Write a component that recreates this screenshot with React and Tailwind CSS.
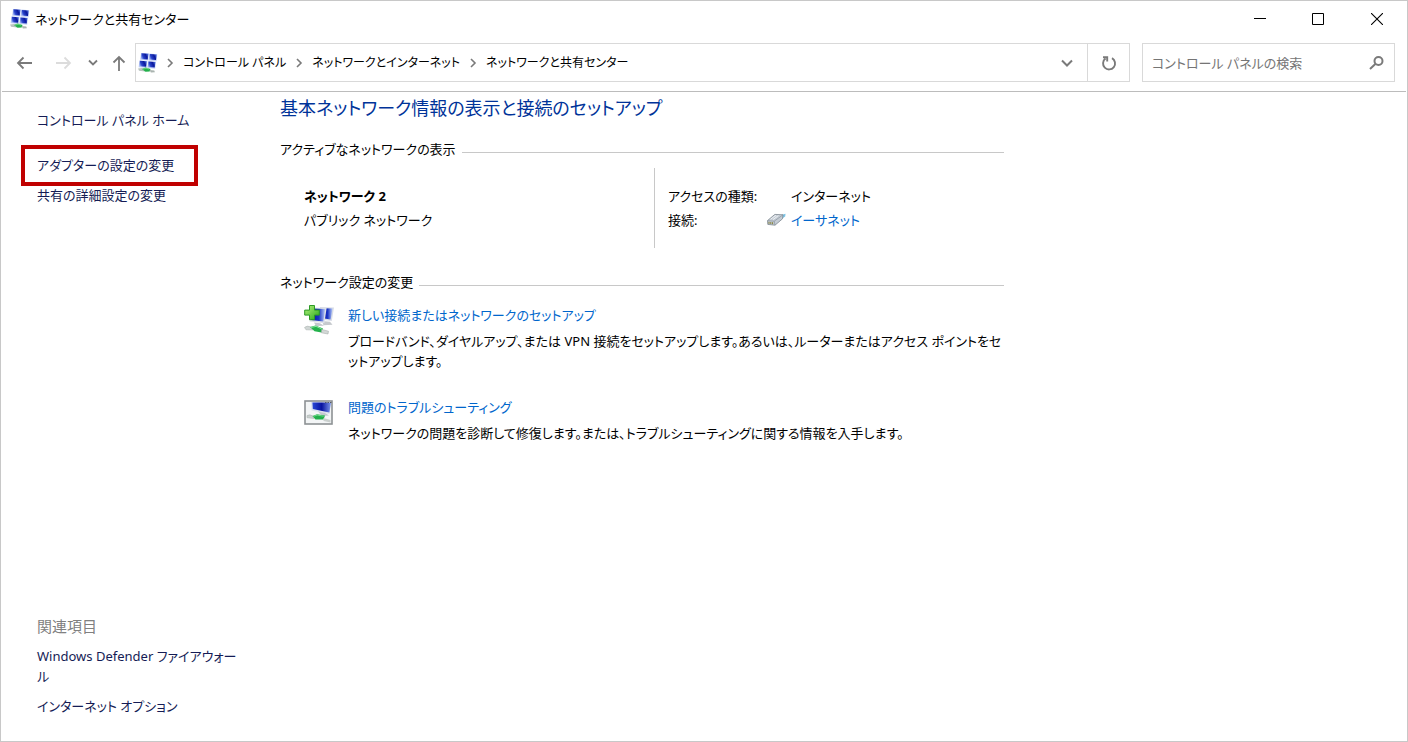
const FONT =
  "font-['Noto_Sans','Noto_Sans_CJK_JP',sans-serif] [font-feature-settings:'palt']";

function NetworkIcon() {
  const screens = [
    [3, 0],
    [11.3, 0.6],
    [1.4, 7.4],
    [10, 8.2],
  ];
  return (
    <svg width="20" height="20" viewBox="0 0 20 20" aria-hidden="true" className="shrink-0">
      <defs>
        <linearGradient id="scr" x1="0" y1="0.7" x2="1" y2="0.3">
          <stop offset="0" stopColor="#a4b9f6" />
          <stop offset="0.3" stopColor="#2a45cc" />
          <stop offset="0.7" stopColor="#0a189c" />
          <stop offset="1" stopColor="#4a6cdc" />
        </linearGradient>
      </defs>
      {screens.map(([x, y]) => (
        <g key={`${x}-${y}`}>
          <path d={`M${x} ${y} l8 .6 l-.8 7 l-8 -.8z`} fill="#c3d1f5" />
          <path d={`M${x + 0.5} ${y + 0.3} l6.9 .5 l-.7 5.600 l-6.900 -.5z`} fill="url(#scr)" />
        </g>
      ))}
      <path d="M0 15.500 l4 -.5 l4 2 l-1 1.500 l-6 -.8z" fill="#b9c3bf" />
      <path d="M4 16 l3.500 -1.400 l5 1.400 l-.8 2.400 l-4.200 .4z" fill="#22b04b" />
      <path d="M5 16.200 l3 -1 l3 .8" stroke="#7fe08f" fill="none" strokeWidth=".8" />
      <path d="M11.500 17 l4.800 .4 l.6 1.800 l-4 .4z" fill="#aab4b0" />
    </svg>
  );
}

function AddNetworkIcon() {
  return (
    <svg width="32" height="32" viewBox="1 1 32 32" aria-hidden="true" className="shrink-0">
      <defs>
        <linearGradient id="monA" x1="0" y1="0" x2="1" y2="0">
          <stop offset="0" stopColor="#0610a0" />
          <stop offset="0.55" stopColor="#1a35c4" />
          <stop offset="1" stopColor="#b9ccf8" />
        </linearGradient>
        <linearGradient id="plus" x1="0" y1="0" x2="1" y2="1">
          <stop offset="0" stopColor="#b5f27c" />
          <stop offset="1" stopColor="#27a81c" />
        </linearGradient>
      </defs>
      <path d="M17 3 L31 3.5 L28.8 17 L17 15.5z" fill="#d9dde6" />
      <path d="M18.5 4.2 L29.6 4.5 L27.6 15.5 L18.5 14z" fill="url(#monA)" />
      <path d="M19 17 l8 .8 l2.500 3 l-9 .4z" fill="#c5c9cd" />
      <path d="M8 3.5 L23.6 4 L21.4 19.2 L6.5 17.4z" fill="#dde1e8" />
      <path d="M9 4.6 L22.2 5 L20.3 17.6 L8 16z" fill="url(#monA)" />
      <path d="M11 18.5 l6 .8 l4 2.4 l-8 .4z" fill="#c3c8cd" />
      <path d="M1.500 23.5 Q4 21 8 23 L10 26 L3 25.8z" fill="#d0d6d4" stroke="#a8b0ae" strokeWidth=".5" />
      <path d="M7 23 L12.5 21.5 L20 24.6 L18.5 28.4 L11.5 27.2z" fill="#24b24c" />
      <path d="M8 23.4 L13 22.4 L18.6 24.8" fill="none" stroke="#86e59c" />
      <path d="M18.6 25.4 L25.5 27.2 L25 30 L18.4 28.8z" fill="#d3d8d6" stroke="#9ca4a2" strokeWidth=".5" />
      <path
        d="M6.500 1.500 h5 v4.600 h4.800 v5 h-4.800 v4.600 h-5 v-4.600 h-4.800 v-5 h4.800z"
        fill="url(#plus)"
        stroke="#2d9a25"
      />
    </svg>
  );
}

function TroubleshootIcon() {
  return (
    <svg width="30" height="30" viewBox="0 -3 30 30" aria-hidden="true" className="shrink-0">
      <defs>
        <linearGradient id="monB" x1="0" y1="0" x2="1" y2="0">
          <stop offset="0" stopColor="#2b4ad6" />
          <stop offset="0.5" stopColor="#0812a0" />
          <stop offset="1" stopColor="#7d97ea" />
        </linearGradient>
      </defs>
      <rect x="1" y="1" width="27" height="23" fill="#f3f5f6" stroke="#8d9194" strokeWidth="1.6" />
      <path d="M7 2 L27 2 L25.5 14 L7.5 10.5z" fill="#dce2ee" />
      <path d="M8.4 2.4 L27 2.4 L25.4 12.4 L8.8 9z" fill="url(#monB)" />
      <path d="M21 2.5h1.5M23.500 2.5h1.5M26 2.5h1.5" stroke="#575c66" />
      <path d="M14 11.5 l7 1.5 l4 2.5 l-7 .5z" fill="#c3c9cf" />
      <path d="M3 15.5 q3 -1.5 6 .5 l1 2.5 l-7 -.8z" fill="#c9cfcd" stroke="#a9b1af" strokeWidth=".5" />
      <path d="M8.5 16 L13 14.2 L21 15.6 L19.5 19.4 L11.5 19.6z" fill="#21b04a" />
      <path d="M9.5 16.3 L13.2 15.1 L19.6 16.2" fill="none" stroke="#83e39a" strokeWidth=".8" />
      <path d="M19.5 18 l7 2 l0 2.5 l-7 -1.5z" fill="#c9cfcd" />
    </svg>
  );
}

function EthernetIcon() {
  return (
    <svg width="20" height="16" viewBox="0 0 20 16" aria-hidden="true" className="shrink-0">
      <path d="M13.5 3.5 L19.5 1.8 L19.2 4.6 L15.5 7z" fill="#7cc4e6" />
      <path d="M1.500 8.6 L8.8 2.4 L17 2.8 L16.500 6.8 L9 13.2 L1.8 12.4z" fill="#c5ccd4" stroke="#7e8891" strokeWidth=".8" />
      <path d="M1.500 8.6 L8.2 9.2 L17 2.8 M8.2 9.2 L9 13.2" fill="none" stroke="#8a949d" strokeWidth=".7" />
      <path d="M4.6 7.200 L10 3.3 M7 7.6 L12.4 3.6" stroke="#f1f4f7" strokeWidth=".9" />
      <path d="M3 9.8v2M4.800 10v2M6.600 10.200v2" stroke="#85813c" />
    </svg>
  );
}

function Glyph({ d, w = 16, h = 16, stroke = "#7a7a7a", sw = 1.6 }) {
  return (
    <svg width={w} height={h} viewBox={`0 0 ${w} ${h}`} fill="none" stroke={stroke} strokeWidth={sw} aria-hidden="true" className="shrink-0">
      <path d={d} />
    </svg>
  );
}

function Crumb({ children }) {
  return (
    <>
      <Glyph w={8} h={10} d="M2 1 L6 5 L2 9" />
      <a href="#" className="mx-[9px] whitespace-nowrap text-xs text-black">
        {children}
      </a>
    </>
  );
}

function SectionTitle({ children }) {
  return (
    <div className="flex items-center gap-1.5">
      <h2 className="whitespace-nowrap">{children}</h2>
      <div className="mt-1.5 flex-1 border-t border-[#c8c8c8]" />
    </div>
  );
}

function Task({ icon, title, children }) {
  return (
    <div className="flex gap-3">
      <div className="flex w-8 shrink-0 items-start">{icon}</div>
      <div className="min-w-0">
        <a href="#" className="block text-[#0066cc]">
          {title}
        </a>
        <p className="mt-1.5">{children}</p>
      </div>
    </div>
  );
}

export default function App() {
  return (
    <div className={`flex min-h-screen flex-col border border-[#c8c8c8] bg-white text-[13px] leading-5 text-black ${FONT}`}>
      <header>
        <div className="flex h-9 items-center pl-[9px]">
          <NetworkIcon />
          <h1 className="ml-[5px] flex-1">ネットワークと共有センター</h1>
          <div className="flex">
            <button aria-label="最小化" className="flex h-9 w-[58px] items-center justify-center">
              <Glyph w={12} h={12} sw={1} stroke="#000" d="M0 5.5h12" />
            </button>
            <button aria-label="最大化" className="flex h-9 w-[58px] items-center justify-center">
              <Glyph w={12} h={12} sw={1} stroke="#000" d="M.5 .5h11v11h-11z" />
            </button>
            <button aria-label="閉じる" className="flex h-9 w-[60px] items-center justify-center">
              <Glyph w={12} h={12} sw={1.1} stroke="#000" d="M0 0L12 12M12 0L0 12" />
            </button>
          </div>
        </div>
        <div className="mx-px flex items-center border-b border-[#bcbcbc] pb-[9px] pr-[11px] pl-3.5 pt-1.5">
          <button aria-label="戻る" className="flex w-[38px]">
            <Glyph w={18} h={14} sw={1.8} d="M16 7H2M7.5 1.5L2 7l5.5 5.5" />
          </button>
          <button aria-label="進む" className="flex w-[34px]">
            <Glyph w={18} h={14} sw={1.8} stroke="#dcdcdc" d="M2 7h14M10.500 1.500L16 7l-5.500 5.500" />
          </button>
          <button aria-label="最近の場所" className="flex w-6">
            <Glyph w={10} h={8} sw={1.8} d="M1 1.500L5 5.500L9 1.500" />
          </button>
          <button aria-label="上へ" className="flex w-[23px]">
            <Glyph w={14} h={18} sw={1.8} d="M7 17V3M1.500 8.500L7 3l5.500 5.500" />
          </button>
          <div className="flex h-[39px] min-w-0 flex-1 items-center border border-[#d9d9d9]">
            <nav className="flex min-w-0 flex-1 items-center pl-0.5">
              <span className="mr-2">
                <NetworkIcon />
              </span>
              <Crumb>コントロール パネル</Crumb>
              <Crumb>ネットワークとインターネット</Crumb>
              <Crumb>ネットワークと共有センター</Crumb>
            </nav>
            <button aria-label="履歴" className="flex h-full w-10 items-center justify-center">
              <Glyph w={12} h={8} sw={2} d="M1 1.500L6 6.500L11 1.500" />
            </button>
            <button aria-label="更新" className="flex h-full w-[42px] items-center justify-center border-l border-[#d9d9d9]">
              <Glyph w={16} h={16} sw={1.9} d="M11 3.200A6 6 0 1 1 4.500 3.600M2 2.200H6.200V6.400" />
            </button>
          </div>
          <label className="ml-3 flex h-[39px] w-[253px] items-center border border-[#d9d9d9] pl-[9px] pr-2.5">
            <input
              type="text"
              aria-label="検索"
              placeholder="コントロール パネルの検索"
              className="min-w-0 flex-1 outline-none placeholder:text-[#757575]"
            />
            <Glyph w={15} h={14} sw={2} d="M6.300 8L1 13M13.500 5A4 4 0 1 1 5.500 5A4 4 0 1 1 13.500 5" />
          </label>
        </div>
      </header>

      <div className="flex flex-1">
        <aside className="flex w-[279px] shrink-0 flex-col pt-[18px] pb-[25px] pl-9 pr-9 text-[#151c55]">
          <a href="#">コントロール パネル ホーム</a>
          <a href="#" className="relative mt-[25px]">
            アダプターの設定の変更
            <span className="absolute -top-2.5 -left-4 h-[41px] w-[177px] border-4 border-[#c00000]" />
          </a>
          <a href="#" className="mt-2.5">
            共有の詳細設定の変更
          </a>
          <div className="mt-auto flex flex-col gap-2.5">
            <h2 className="text-[15px] text-[#808080]">関連項目</h2>
            <a href="#" className="whitespace-nowrap">
              Windows Defender ファイアウォー
              <br />ル
            </a>
            <a href="#">インターネット オプション</a>
          </div>
        </aside>

        <main className="w-full max-w-[724px]">
          <h1 className="text-lg leading-8 text-[#003399]">基本ネットワーク情報の表示と接続のセットアップ</h1>
          <section className="mt-[15px]">
            <SectionTitle>アクティブなネットワークの表示</SectionTitle>
            <div className="mt-[9px] flex h-20 pl-6 leading-6">
              <div className="w-[351px] border-r border-[#c8c8c8] pt-4">
                <p className="font-bold">ネットワーク 2</p>
                <p>パブリック ネットワーク</p>
              </div>
              <dl className="grid grid-cols-[98px_1fr] content-start pt-4 pl-[13px]">
                <dt>アクセスの種類:</dt>
                <dd className="pl-[25px]">インターネット</dd>
                <dt>接続:</dt>
                <dd className="flex items-center gap-[5px]">
                  <EthernetIcon />
                  <a href="#" className="text-[#0066cc]">
                    イーサネット
                  </a>
                </dd>
              </dl>
            </div>
          </section>
          <section className="mt-6">
            <SectionTitle>ネットワーク設定の変更</SectionTitle>
            <div className="mt-[13px] flex flex-col gap-[26px] pl-6">
              <Task icon={<AddNetworkIcon />} title="新しい接続またはネットワークのセットアップ">
                ブロードバンド、ダイヤルアップ、または VPN 接続をセットアップします。あるいは、ルーターまたはアクセス ポイントをセ
                <br />
                ットアップします。
              </Task>
              <Task icon={<TroubleshootIcon />} title="問題のトラブルシューティング">
                ネットワークの問題を診断して修復します。または、トラブルシューティングに関する情報を入手します。
              </Task>
            </div>
          </section>
        </main>
      </div>
    </div>
  );
}
